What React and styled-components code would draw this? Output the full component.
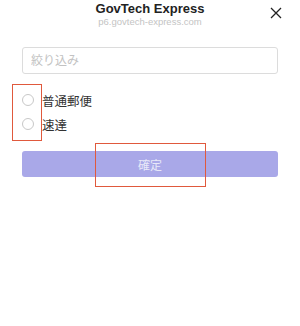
import { createGlobalStyle, styled } from "styled-components"

const GlobalStyle = createGlobalStyle`
body{
    margin: 0;
    background: #fff;
    font-family: "Liberation Sans", "Noto Sans CJK JP", sans-serif;
}
`

const options = ["普通郵便", "速達"]

const App = () => {
  return (
    <Page>
      <GlobalStyle />
      <Header>
        <Title>GovTech Express</Title>
        <Sub>p6.govtech-express.com</Sub>
        <Close aria-label="close">
          <svg width="12" height="12" viewBox="0 0 12 12">
            <path d="M1 1 L11 11 M11 1 L1 11" stroke="#222" strokeWidth="1.3" />
          </svg>
        </Close>
      </Header>
      <Body>
        <Search placeholder="絞り込み" />
        <List>
          {options.map((o) => (
            <Option key={o}>
              <Radio />
              <span>{o}</span>
            </Option>
          ))}
          <Mark $w={30} $h={57} $l={-10} $t={-4} />
        </List>
        <ButtonWrap>
          <Confirm>確定</Confirm>
          <Mark $w={111} $h={44} $l={73} $t={-8} />
        </ButtonWrap>
      </Body>
    </Page>
  )
}

const Page = styled.div`
width: 300px;
height: 326px;
background: #fff;
`

const Header = styled.div`
position: relative;
display: flex;
flex-direction: column;
align-items: center;
padding-top: 1px;
height: 46px;
box-sizing: border-box;
`

const Title = styled.div`
font-size: 13px;
font-weight: 700;
color: #222;
line-height: 15px;
`

const Sub = styled.div`
font-size: 9.5px;
color: #c4c4c4;
line-height: 12px;
`

const Close = styled.div`
position: absolute;
right: 18px;
top: 7px;
width: 12px;
height: 12px;
display: flex;
`

const Body = styled.div`
padding: 1px 22px 0;
display: flex;
flex-direction: column;
`

const Search = styled.input`
height: 27px;
box-sizing: border-box;
border: 1px solid #dcdcdc;
border-radius: 3px;
padding: 0 8px;
font-family: inherit;
font-size: 12px;
outline: none;
&::placeholder{
    color: #c2c2c2;
}
`

const List = styled.div`
position: relative;
display: flex;
flex-direction: column;
margin-top: 14px;
`

const Option = styled.label`
display: flex;
align-items: center;
height: 24px;
gap: 8px;
font-size: 12.5px;
color: #333;
`

const Radio = styled.span`
width: 10px;
height: 10px;
border: 1px solid #c8c8c8;
border-radius: 50%;
`

const Mark = styled.div`
position: absolute;
left: ${(p) => p.$l}px;
top: ${(p) => p.$t}px;
width: ${(p) => p.$w}px;
height: ${(p) => p.$h}px;
border: 1.5px solid #e0593d;
box-sizing: border-box;
pointer-events: none;
`

const ButtonWrap = styled.div`
position: relative;
margin-top: 15px;
`

const Confirm = styled.button`
width: 100%;
height: 26px;
border: none;
border-radius: 3px;
background: #a9a8e8;
color: #e8e8f8;
font-family: inherit;
font-size: 12px;
`

export default App
